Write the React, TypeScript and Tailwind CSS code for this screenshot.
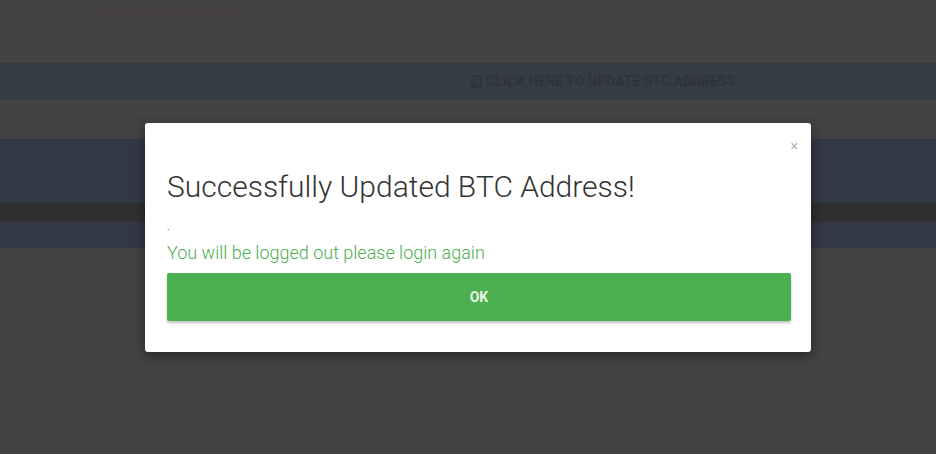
import React from "react";

export default function App() {
    return (
        <main className="relative w-[936px] h-[454px] overflow-hidden bg-[#434343] font-['Roboto',sans-serif]">
            {/* dimmed page behind the modal */}
            <section className="flex flex-col">
                <div className="h-[43px] border-b border-[#3f3f3f] pl-[89px]">
                    <p className="text-[15px] leading-[20px] font-light text-[#523f3f]">BTC address is required.</p>
                </div>
                <div className="h-[20px]" />
                <div className="h-[37px] bg-[#353c45] flex items-center pl-[471px]">
                    <span className="flex items-center gap-[4px] text-[14px] font-bold text-[#2e343c] uppercase">
                        <svg width="11" height="13" viewBox="0 0 10 12" className="text-[#2e343c]">
                            <rect x="1" y="1" width="8" height="10" fill="none" stroke="currentColor" strokeWidth="1.5" />
                            <path d="M3 4h4M3 6h4M3 8h4" stroke="currentColor" strokeWidth="1" />
                        </svg>
                        Click here to update BTC address
                    </span>
                </div>
                <div className="h-[20px] border-b border-[#3f3f3f]" />
                <div className="h-[19px]" />
                <div className="h-[64px] bg-[#323844]" />
                <div className="h-[19px] bg-[#2f2f2f]" />
                <div className="h-[26px] bg-[#323844]" />
            </section>

            {/* modal */}
            <div className="absolute left-[145px] top-[123px] w-[666px] h-[229px] bg-white rounded-[3px] shadow-[0_4px_12px_rgba(0,0,0,0.45)] px-[22px] pr-[20px]">
                <button className="absolute right-[13px] top-[16px] text-[#b5b5b5] text-[14px] leading-none">×</button>
                <h2 className="pt-[46px] text-[30px] leading-[36px] font-light text-[#333]">Successfully Updated BTC Address!</h2>
                <p className="mt-[16px] text-[10px] leading-[12px] text-[#666]">.</p>
                <p className="mt-[9px] text-[18px] leading-[22px] font-light text-[#4caf50]">You will be logged out please login again</p>
                <button className="mt-[9px] w-full h-[48px] rounded-[2px] bg-[#4caf50] text-[#eaf6ea] text-[14px] font-bold shadow-[0_2px_3px_rgba(0,0,0,0.25)]">
                    OK
                </button>
            </div>
        </main>
    );
}
